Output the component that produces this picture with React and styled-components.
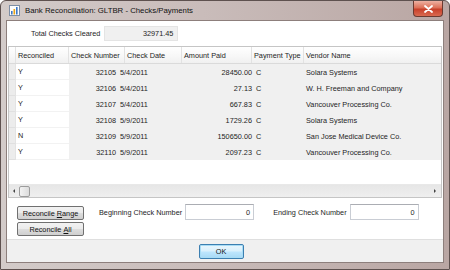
import React from 'react'
import styled, { createGlobalStyle } from 'styled-components'

const GlobalStyle = createGlobalStyle`
  html, body { margin: 0; padding: 0; }
  body {
    width: 450px;
    height: 270px;
    overflow: hidden;
    background: #ffffff;
    font-family: "Liberation Sans", Arial, sans-serif;
  }
`

const rows = [
  { rec: 'Y', num: '32105', date: '5/4/2011', amount: '28450.00', type: 'C', vendor: 'Solara Systems' },
  { rec: 'Y', num: '32106', date: '5/4/2011', amount: '27.13', type: 'C', vendor: 'W. H. Freeman and Company' },
  { rec: 'Y', num: '32107', date: '5/4/2011', amount: '667.83', type: 'C', vendor: 'Vancouver Processing Co.' },
  { rec: 'Y', num: '32108', date: '5/9/2011', amount: '1729.26', type: 'C', vendor: 'Solara Systems' },
  { rec: 'N', num: '32109', date: '5/9/2011', amount: '150650.00', type: 'C', vendor: 'San Jose Medical Device Co.' },
  { rec: 'Y', num: '32110', date: '5/9/2011', amount: '2097.23', type: 'C', vendor: 'Vancouver Processing Co.' },
]

const Window = styled.div`
  width: 450px;
  height: 270px;
  box-sizing: border-box;
  display: flex;
  flex-direction: column;
  border: 1px solid #5e514f;
  border-radius: 6px 6px 0 0;
  background: linear-gradient(90deg, #d3cbc9 0%, #c9bcba 45%, #b9a6a3 100%);
  padding: 0 5px 6px 5px;
`

const TitleBar = styled.div`
  height: 19px;
  display: flex;
  align-items: center;
  gap: 5px;
  padding-left: 3px;
`

const TitleText = styled.span`
  font-size: 7.8px;
  color: #111;
  flex: 1;
`

const CloseBtn = styled.div`
  width: 30px;
  height: 16px;
  margin-top: -3px;
  margin-right: 1px;
  border: 1px solid #6b3a30;
  border-top: none;
  border-radius: 0 0 4px 4px;
  background: linear-gradient(180deg, #eeb1a2 0%, #dc7058 45%, #c8402a 55%, #d96a50 100%);
  display: flex;
  align-items: center;
  justify-content: center;
  box-sizing: border-box;
`

const Client = styled.div`
  flex: 1;
  display: flex;
  flex-direction: column;
  background: #ffffff;
  border: 1px solid #8d7f7c;
  font-size: 7.3px;
  color: #1e1e1e;
`

const TotalRow = styled.div`
  height: 25px;
  display: flex;
  align-items: center;
  padding-left: 24px;
  gap: 4px;
`

const ReadBox = styled.div`
  width: 74px;
  height: 15px;
  box-sizing: border-box;
  background: #f0f0f0;
  border: 1px solid #e4e4e4;
  display: flex;
  align-items: center;
  justify-content: flex-end;
  padding-right: 4px;
`

const Grid = styled.div`
  margin: 0 1px;
  height: 152px;
  box-sizing: border-box;
  border: 1px solid #c5c5c5;
  display: flex;
  flex-direction: column;
`

const HeaderRow = styled.div`
  height: 17px;
  display: grid;
  grid-template-columns: 7px 53px 56px 57px 70px 52px 1fr;
  background: linear-gradient(180deg, #ffffff 0%, #f7f7f7 60%, #f0f0f0 100%);
  border-bottom: 1px solid #dadada;
  box-sizing: border-box;
`

const HeadCell = styled.div`
  display: flex;
  align-items: center;
  padding-left: 2px;
  border-right: 1px solid ${({ $last }) => ($last ? 'transparent' : '#e2e2e2')};
  white-space: nowrap;
  overflow: hidden;
`

const DataRow = styled.div`
  height: 16px;
  display: grid;
  grid-template-columns: 7px 53px 49px 60px 76px 50px 1fr;
  background: #f0f0f0;
`

const Cell = styled.div`
  display: flex;
  align-items: center;
  justify-content: ${({ $right }) => ($right ? 'flex-end' : 'flex-start')};
  padding: ${({ $right }) => ($right ? '0 2px 0 0' : '0 0 0 2px')};
  background: ${({ $white }) => ($white ? '#ffffff' : 'transparent')};
  border-bottom: ${({ $white }) => ($white ? '1px solid #f2f2f2' : 'none')};
  box-sizing: border-box;
  white-space: nowrap;
`

const RowHead = styled.div`
  background: #ececec;
  border-bottom: 1px solid #e0e0e0;
  border-right: 1px solid #e3e3e3;
  box-sizing: border-box;
`

const Empty = styled.div`
  flex: 1;
  background: #ffffff;
`

const HScroll = styled.div`
  height: 13px;
  display: flex;
  align-items: center;
  background: linear-gradient(180deg, #e6e6e6 0%, #efefef 100%);
  border-top: 1px solid #e8e8e8;
  box-sizing: border-box;
  padding: 0 4px;
  gap: 4px;
`

const Thumb = styled.div`
  width: 11px;
  height: 11px;
  box-sizing: border-box;
  border: 1px solid #9c9c9c;
  border-radius: 2px;
  background: linear-gradient(90deg, #f3f3f3, #dcdcdc);
`

const Arrow = styled.div`
  width: 0;
  height: 0;
  border-top: 2px solid transparent;
  border-bottom: 2px solid transparent;
  ${({ $dir }) => ($dir === 'left' ? 'border-right: 2px solid #444;' : 'border-left: 2px solid #444;')}
  margin-left: ${({ $push }) => ($push ? 'auto' : '0')};
  margin-right: ${({ $push }) => ($push ? '1px' : '0')};
`

const Controls = styled.div`
  height: 41px;
  display: flex;
  padding: 6px 0 0 10px;
  box-sizing: border-box;
`

const ButtonCol = styled.div`
  display: flex;
  flex-direction: column;
  gap: 2px;
  margin-top: 2px;
`

const Btn = styled.div`
  width: 67px;
  height: 14px;
  box-sizing: border-box;
  border: 1px solid #707070;
  border-radius: 2px;
  background: linear-gradient(180deg, #f2f2f2 0%, #ebebeb 48%, #dddddd 52%, #cfcfcf 100%);
  display: flex;
  align-items: center;
  justify-content: center;
  color: #111;
`

const Field = styled.div`
  display: flex;
  align-items: center;
  gap: 3px;
  margin-left: ${({ $gap }) => $gap}px;
  height: 16px;
`

const InputBox = styled.div`
  width: 69px;
  height: 16px;
  box-sizing: border-box;
  border: 1px solid #c9cdd4;
  border-top-color: #abadb3;
  background: #fff;
  display: flex;
  align-items: center;
  justify-content: flex-end;
  padding-right: 3px;
`

const Footer = styled.div`
  flex: 1;
  background: #f0f0f0;
  border-top: 1px solid #dfdfdf;
  display: flex;
  justify-content: center;
  align-items: center;
`

const OkBtn = styled.div`
  width: 45px;
  height: 15px;
  box-sizing: border-box;
  border: 1px solid #3c7fb1;
  border-radius: 2px;
  box-shadow: inset 0 0 0 1px #a8dcf5;
  background: linear-gradient(180deg, #eaf6fd 0%, #d9f0fc 48%, #bee6fd 52%, #a7d9f5 100%);
  display: flex;
  align-items: center;
  justify-content: center;
  color: #111;
  margin-right: 8px;
`

const U = styled.span`
  text-decoration: underline;
`

const AppIcon = () => (
  <svg width="11" height="11" viewBox="0 0 11 11">
    <rect x="0.5" y="0.5" width="10" height="10" fill="#fdfdfd" stroke="#7d8ea5" />
    <rect x="2" y="6" width="1.6" height="3.5" fill="#3a78c8" />
    <rect x="4.5" y="4" width="1.6" height="5.5" fill="#e8a317" />
    <rect x="7" y="2" width="1.6" height="7.5" fill="#3a78c8" />
  </svg>
)

const CloseGlyph = () => (
  <svg width="9" height="8" viewBox="0 0 9 8">
    <path d="M1 1 L8 7 M8 1 L1 7" stroke="#ffffff" strokeWidth="1.8" strokeLinecap="round" />
  </svg>
)

export default function App() {
  return (
    <>
      <GlobalStyle />
      <Window>
        <TitleBar>
          <AppIcon />
          <TitleText>Bank Reconciliation: GLTBR - Checks/Payments</TitleText>
          <CloseBtn>
            <CloseGlyph />
          </CloseBtn>
        </TitleBar>
        <Client>
          <TotalRow>
            <span>Total Checks Cleared</span>
            <ReadBox>32971.45</ReadBox>
          </TotalRow>
          <Grid>
            <HeaderRow>
              <HeadCell />
              <HeadCell>Reconciled</HeadCell>
              <HeadCell>Check Number</HeadCell>
              <HeadCell>Check Date</HeadCell>
              <HeadCell>Amount Paid</HeadCell>
              <HeadCell>Payment Type</HeadCell>
              <HeadCell $last>Vendor Name</HeadCell>
            </HeaderRow>
            {rows.map((r) => (
              <DataRow key={r.num}>
                <RowHead />
                <Cell $white>{r.rec}</Cell>
                <Cell $right>{r.num}</Cell>
                <Cell>{r.date}</Cell>
                <Cell $right>{r.amount}</Cell>
                <Cell>{r.type}</Cell>
                <Cell>{r.vendor}</Cell>
              </DataRow>
            ))}
            <Empty />
            <HScroll>
              <Arrow $dir="left" />
              <Thumb />
              <Arrow $dir="right" $push />
            </HScroll>
          </Grid>
          <Controls>
            <ButtonCol>
              <Btn>Reconcile&nbsp;<U>R</U>ange</Btn>
              <Btn>Reconcile&nbsp;<U>A</U>ll</Btn>
            </ButtonCol>
            <Field $gap={15}>
              <span>Beginning Check Number</span>
              <InputBox>0</InputBox>
            </Field>
            <Field $gap={19}>
              <span>Ending Check Number</span>
              <InputBox>0</InputBox>
            </Field>
          </Controls>
          <Footer>
            <OkBtn>OK</OkBtn>
          </Footer>
        </Client>
      </Window>
    </>
  )
}
